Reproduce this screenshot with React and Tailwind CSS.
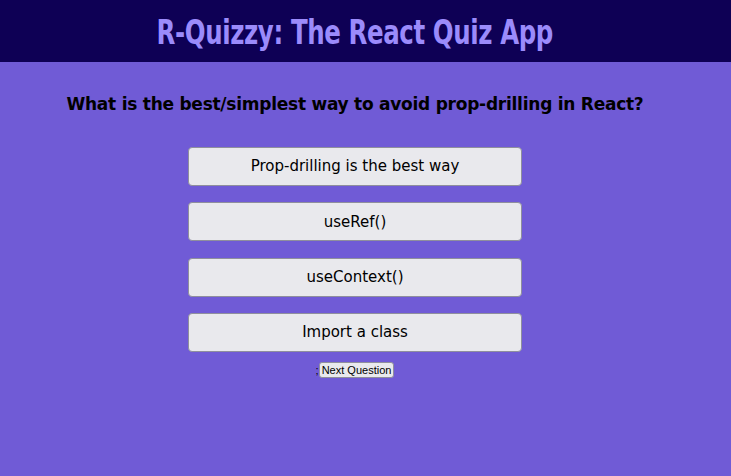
export default function App() {
  const options = ["Prop-drilling is the best way", "useRef()", "useContext()", "Import a class"];
  return (
    <div className="min-h-[476px] bg-[#705bd6] w-full">
      <header className="h-[62px] bg-[#0e0055] flex items-center">
        <div className="w-[710px] flex justify-center">
          <h1 className="text-[#9b8bfb] text-[34px] font-bold leading-none tracking-[-0.5px] scale-x-[0.8] mt-[2px]" style={{ fontFamily: '"DejaVu Sans Condensed", "DejaVu Sans", sans-serif' }}>
            R-Quizzy: The React Quiz App
          </h1>
        </div>
      </header>
      <div className="w-[710px] flex flex-col items-center" style={{ fontFamily: 'Tahoma, "DejaVu Sans", sans-serif' }}>
        <h2 className="mt-[30px] text-[17px] font-bold text-black leading-[24px] tracking-[-0.25px]">What is the best/simplest way to avoid prop-drilling in React?</h2>
        <div className="mt-[31px] flex flex-col gap-[16.3px]">
          {options.map((o) => (
            <button key={o} className="w-[334px] h-[39px] bg-[#e9e9ed] border border-[#8f8f9d] rounded-[4px] text-[15px] text-black">
              {o}
            </button>
          ))}
        </div>
        <div className="mt-[10px] flex items-center text-[11px] text-black" style={{ fontFamily: '"Liberation Sans", sans-serif' }}>
          <span>;</span>
          <button className="bg-[#e9e9ed] border border-[#8f8f9d] rounded-[3px] px-[2px] h-[16px] leading-[13px] text-[11px]">Next Question</button>
        </div>
      </div>
    </div>
  );
}
